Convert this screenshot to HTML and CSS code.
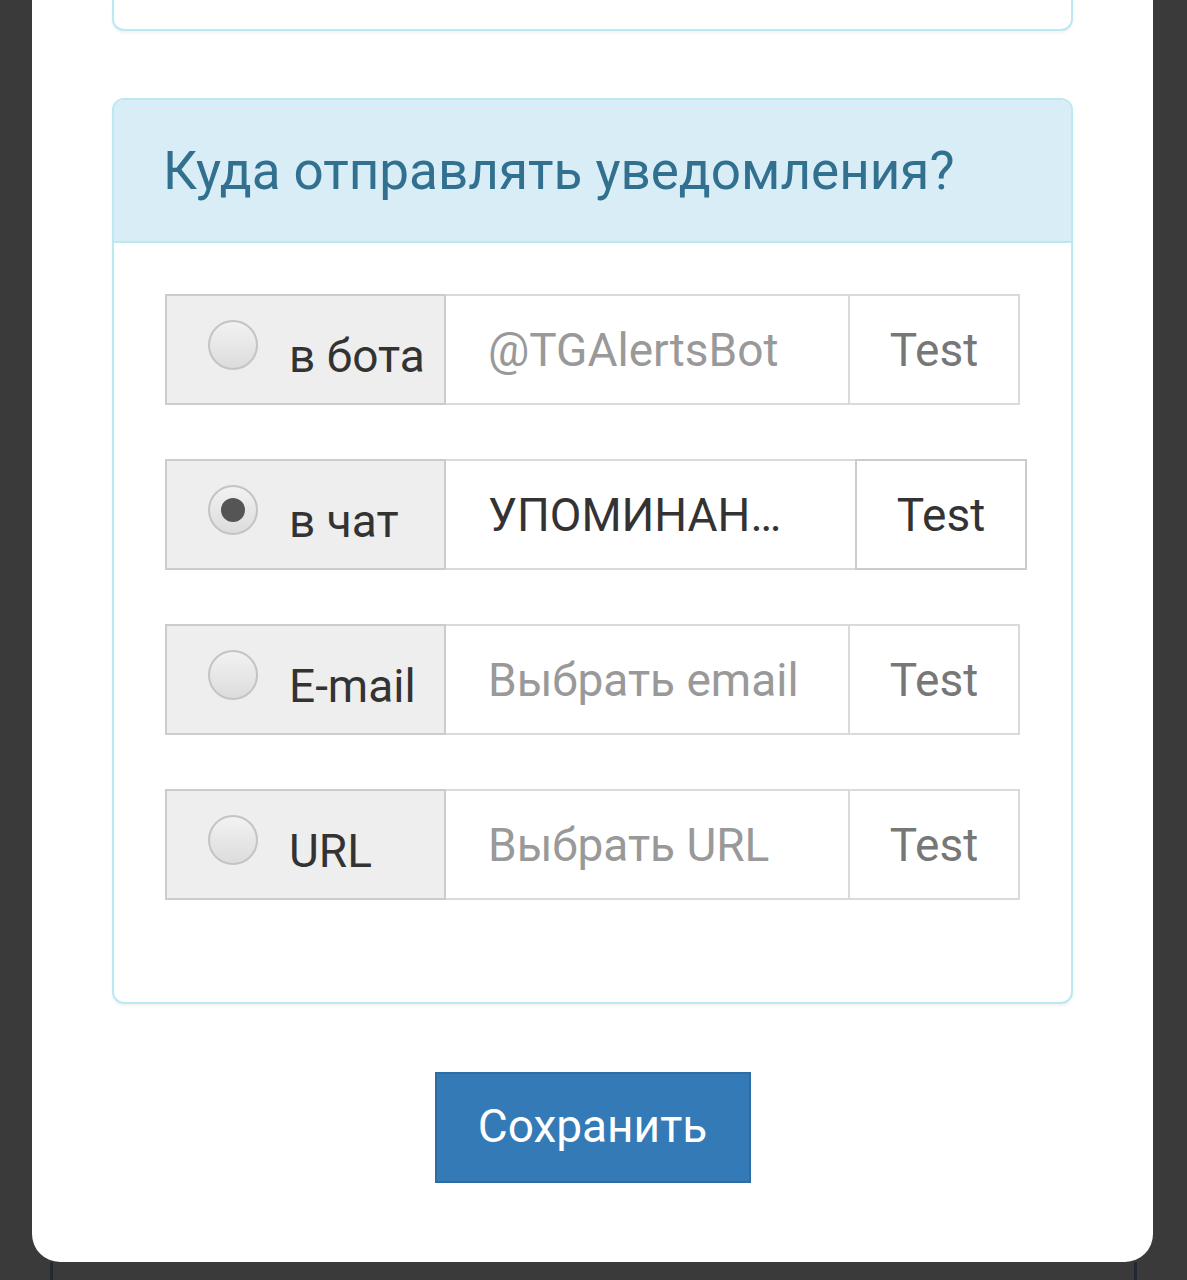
FILE: index.html
```html
<!DOCTYPE html>
<html lang="ru">
<head>
<meta charset="utf-8">
<link rel="stylesheet" href="styles.css">
</head>
<body>
<div class="modal">
  <div class="panel panel-top"></div>
  <div class="panel panel-main">
    <div class="panel-heading">Куда отправлять уведомления?</div>
    <div class="panel-body">
      <div class="row">
        <div class="addon"><span class="radio"></span><span class="label">в бота</span></div>
        <div class="field placeholder">@TGAlertsBot</div>
        <div class="btn-test">Test</div>
      </div>
      <div class="row">
        <div class="addon"><span class="radio checked"></span><span class="label">в чат</span></div>
        <div class="field field-wide">УПОМИНАН…</div>
        <div class="btn-test active">Test</div>
      </div>
      <div class="row">
        <div class="addon"><span class="radio"></span><span class="label">E-mail</span></div>
        <div class="field placeholder">Выбрать email</div>
        <div class="btn-test">Test</div>
      </div>
      <div class="row">
        <div class="addon"><span class="radio"></span><span class="label">URL</span></div>
        <div class="field placeholder">Выбрать URL</div>
        <div class="btn-test">Test</div>
      </div>
    </div>
  </div>
  <div class="actions"><div class="btn-save">Сохранить</div></div>
</div>
<div class="under"></div>
</body>
</html>
```
FILE: styles.css
```css
html, body {
  margin: 0;
  padding: 0;
}
body {
  background: #3a3a3a;
  font-family: Roboto, "Noto Sans", "Liberation Sans", sans-serif;
  height: 1280px;
  overflow: hidden;
}
.modal {
  margin-left: 32px;
  width: 1121px;
  height: 1262px;
  background: #fff;
  border-radius: 0 0 28px 28px;
  display: flex;
  flex-direction: column;
  align-items: center;
}
.panel {
  width: 961px;
  box-sizing: border-box;
  border: 2px solid #bce8f1;
  background: #fff;
  box-shadow: 0 2px 3px rgba(0,0,0,0.05);
}
.panel-top {
  height: 31px;
  border-top: none;
  border-radius: 0 0 12px 12px;
}
.panel-main {
  margin-top: 67px;
  border-radius: 12px;
  overflow: hidden;
}
.panel-heading {
  background: #d9edf7;
  border-bottom: 2px solid #bce8f1;
  color: #31708f;
  font-size: 53px;
  line-height: 60px;
  height: 143px;
  box-sizing: border-box;
  padding: 41px 0 0 49px;
}
.panel-body {
  padding: 51px 0 102px 51px;
  display: flex;
  flex-direction: column;
  gap: 54px;
}
.row {
  display: flex;
  height: 111px;
  font-size: 46px;
}
.addon {
  width: 281px;
  box-sizing: border-box;
  background: #eee;
  border: 2px solid #ccc;
  display: flex;
  align-items: center;
  padding-left: 41px;
}
.radio {
  width: 50px;
  height: 50px;
  box-sizing: border-box;
  border-radius: 50%;
  border: 2px solid #c4c4c4;
  background: linear-gradient(#f2f2f2, #dcdcdc);
  display: flex;
  align-items: center;
  justify-content: center;
  margin-top: -9px;
  flex-shrink: 0;
}
.radio.checked::after {
  content: "";
  width: 24px;
  height: 24px;
  border-radius: 50%;
  background: #555;
}
.label {
  color: #333;
  margin-left: 31px;
  margin-top: 12px;
  white-space: nowrap;
}
.field {
  width: 402px;
  box-sizing: border-box;
  border: 2px solid #dadada;
  border-left: none;
  border-right: none;
  display: flex;
  align-items: center;
  padding-left: 42px;
  color: #333;
  background: #fff;
  white-space: nowrap;
}
.field-wide {
  width: 409px;
}
.placeholder {
  color: #999;
}
.btn-test {
  width: 172px;
  box-sizing: border-box;
  border: 2px solid #dadada;
  display: flex;
  align-items: center;
  justify-content: center;
  color: #777;
  background: #fff;
}
.btn-test.active {
  color: #333;
  border-color: #ccc;
}
.actions {
  margin-top: 68px;
}
.btn-save {
  width: 316px;
  height: 111px;
  box-sizing: border-box;
  background: #337ab7;
  border: 2px solid #2e6da4;
  color: #fff;
  font-size: 46px;
  display: flex;
  align-items: center;
  justify-content: center;
  padding-bottom: 3px;
}
.under {
  margin: 0 50px;
  height: 18px;
  border-left: 3px solid #222931;
  border-right: 3px solid #222931;
}
```
